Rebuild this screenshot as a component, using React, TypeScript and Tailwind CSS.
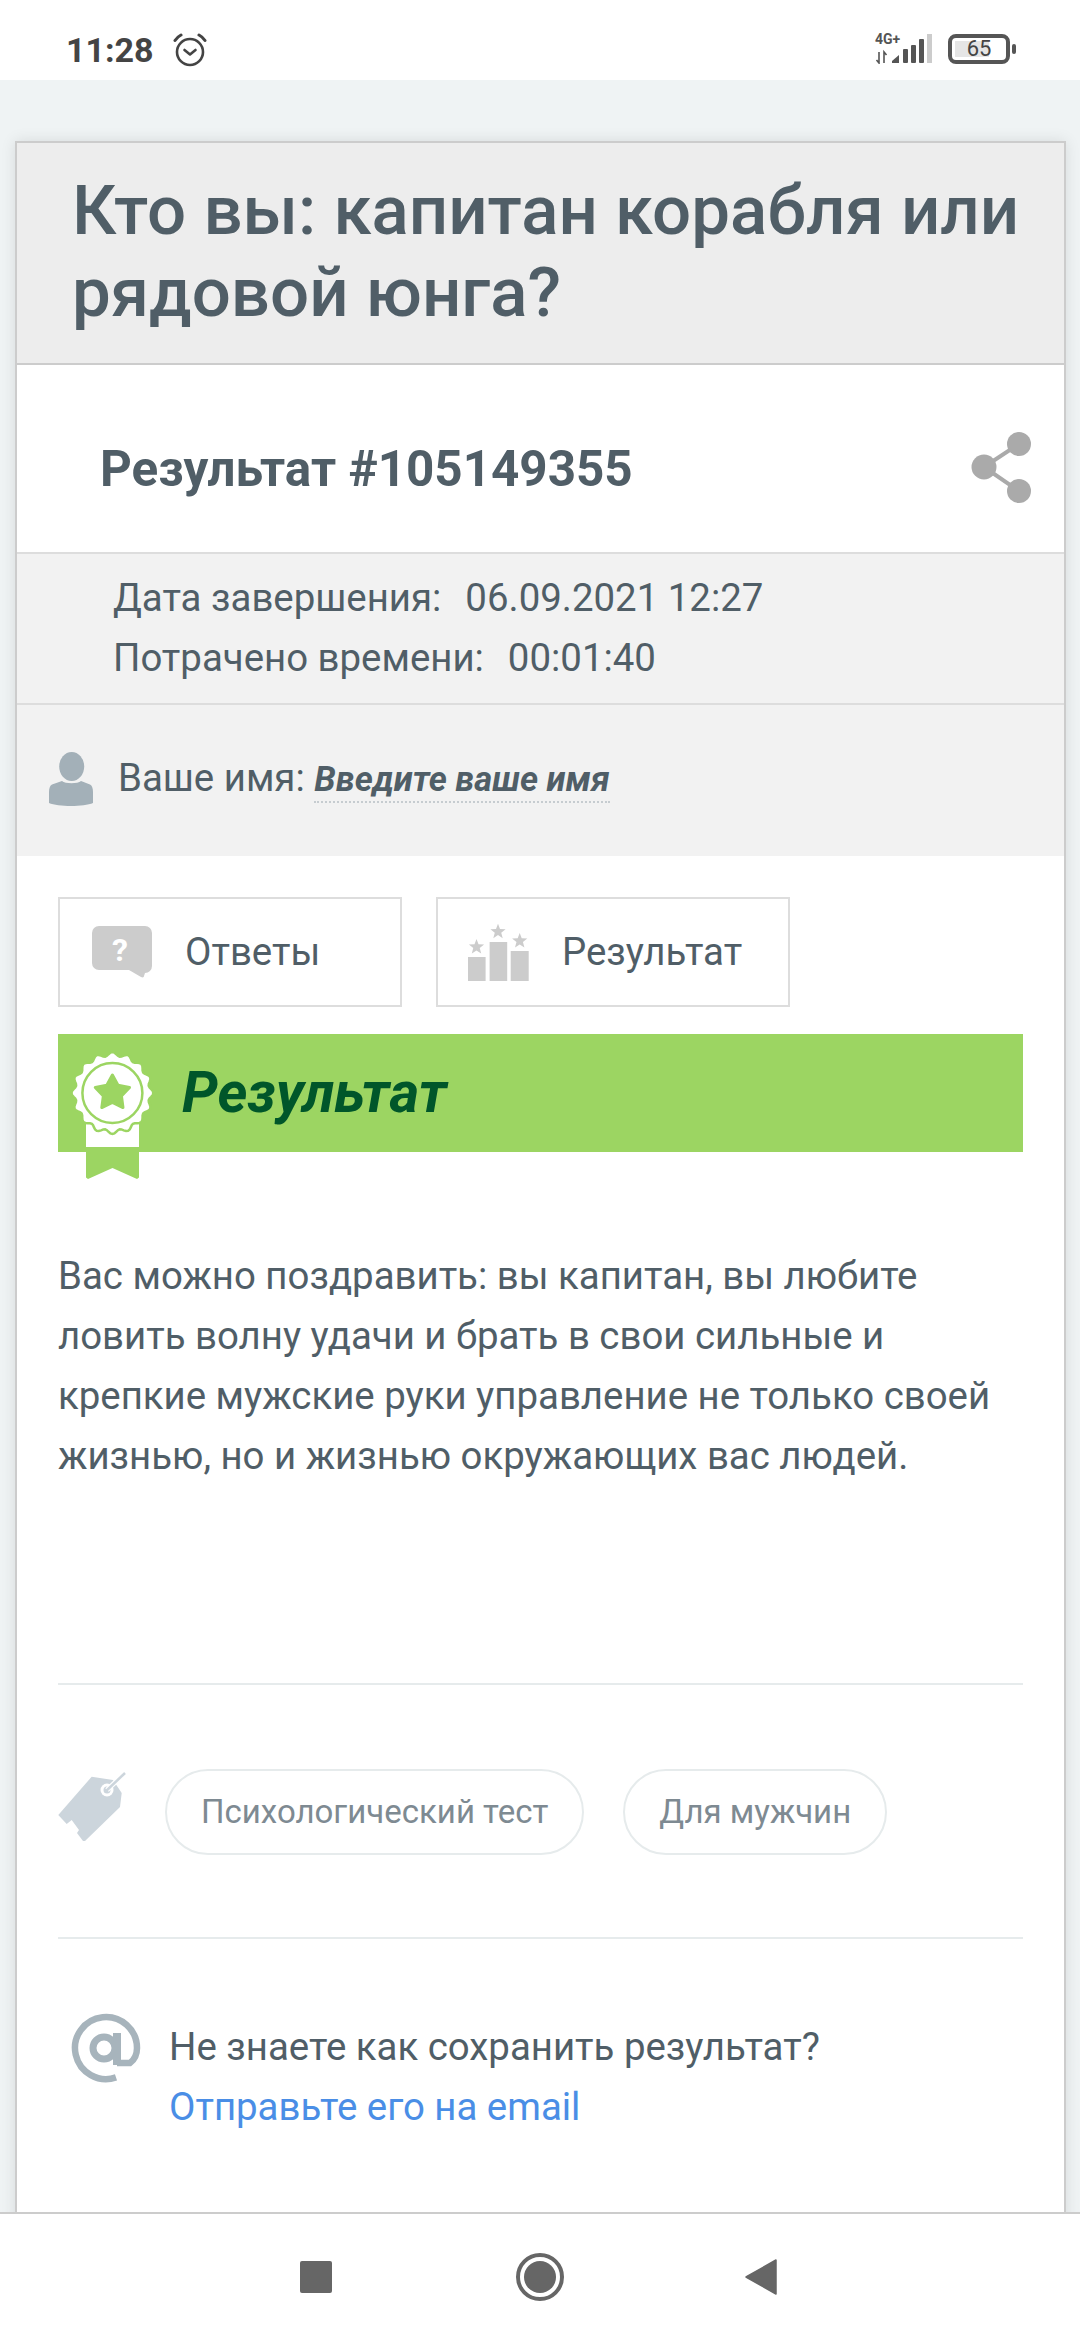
import React from 'react';

// Scalloped rosette outline for the medal
const scallopPath = (cx: number, cy: number, r: number, amp: number, n: number) => {
  const pts: string[] = [];
  const steps = n * 8;
  for (let i = 0; i < steps; i++) {
    const a = (i / steps) * Math.PI * 2;
    const rr = r + amp * Math.cos(a * n);
    pts.push(`${(cx + rr * Math.sin(a)).toFixed(2)},${(cy - rr * Math.cos(a)).toFixed(2)}`);
  }
  return pts.join(' ');
};

const starPoints = (cx: number, cy: number, R: number, r: number) => {
  const pts: string[] = [];
  for (let i = 0; i < 10; i++) {
    const a = (i / 10) * Math.PI * 2;
    const rr = i % 2 === 0 ? R : r;
    pts.push(`${(cx + rr * Math.sin(a)).toFixed(2)},${(cy - rr * Math.cos(a)).toFixed(2)}`);
  }
  return pts.join(' ');
};

const AlarmIcon = () => (
  <svg width="34" height="36" viewBox="1 0 34 36" fill="none" stroke="#444" strokeWidth="2.6" strokeLinecap="round" strokeLinejoin="round">
    <circle cx="18" cy="20" r="13" />
    <path d="M12.5 18l5.5 4.5 5.5-4.5" />
    <path d="M3 8.5c1.5-2.5 3.5-4.2 6-5.5" strokeWidth="3" />
    <path d="M33 8.5c-1.5-2.5-3.5-4.2-6-5.5" strokeWidth="3" />
  </svg>
);

const SignalIcon = () => (
  <svg width="57" height="30" viewBox="0 0 57 30" className="block">
    <path d="M4 18v11L1.5 26M9 29V18l2.5 3" fill="none" stroke="#555" strokeWidth="1.6" />
    <path d="M17 29v-2l7-6v8z" fill="#555" />
    <rect x="28" y="15" width="5" height="14" rx="1" fill="#555" />
    <rect x="36" y="11" width="5" height="18" rx="1" fill="#555" />
    <rect x="44" y="5" width="5" height="24" rx="1" fill="#555" />
    <rect x="52" y="0" width="5" height="29" fill="#ccc" />
  </svg>
);

const ShareIcon = () => (
  <svg width="60" height="72" viewBox="0 0 60 72">
    <path d="M13 35L48 12M13 35l35 24" stroke="#aaa" strokeWidth="4" fill="none" />
    <circle cx="48" cy="12" r="12" fill="#aaa" />
    <circle cx="13" cy="35" r="12.5" fill="#aaa" />
    <circle cx="48" cy="59" r="12" fill="#aaa" />
  </svg>
);

const PersonIcon = () => (
  <svg width="44" height="54" viewBox="9 12 44 54" fill="#a3b0b8">
    <ellipse cx="31.7" cy="26.5" rx="12.5" ry="14.5" />
    <path d="M22 41c3 3 16 3 19 0l9 3.500c2 1 3 4 3 7.500v11c-9 4-35 4-44 0V52c0-3.500 1-6.500 3-7.500z" />
  </svg>
);

const QuestionIcon = () => (
  <svg width="62" height="52" viewBox="0 0 62 52">
    <path d="M8 0h46a7 7 0 0 1 7 7v33a7 7 0 0 1-7 7l-1 3c0 1-1 2-3 1l-12-7H8a7 7 0 0 1-7-7V7a7 7 0 0 1 7-7z" fill="#ccc" />
    <text x="29" y="35" textAnchor="middle" fill="#fff" fontSize="32" fontWeight="700" fontFamily="Roboto, sans-serif">?</text>
  </svg>
);

const PodiumIcon = () => (
  <svg width="62" height="58" viewBox="0 0 62 58" fill="#ccc">
    <rect x="0" y="34" width="17.600" height="24" />
    <rect x="21.600" y="19" width="17.600" height="39" />
    <rect x="42.700" y="28" width="18" height="30" />
    <polygon points={starPoints(8.5, 24, 8, 3.4)} />
    <polygon points={starPoints(30, 8.7, 8, 3.4)} />
    <polygon points={starPoints(51.7, 18, 8, 3.4)} />
  </svg>
);

const MedalIcon = () => (
  <svg width="96" height="150" viewBox="0 0 96 150">
    <rect x="28" y="85" width="53" height="28" fill="#fff" />
    <path d="M28 118h53v25.500l-2 1.500-24.500-11L30 145l-2-1.500z" fill="#9cd562" />
    <polygon points={scallopPath(54.4, 59, 39, 2, 16)} fill="#fff" stroke="#9cd562" strokeWidth="2.500" />
    <circle cx="54.4" cy="59" r="30" fill="#fff" stroke="#9cd562" strokeWidth="2.500" />
    <polygon points={starPoints(54.4, 59, 18, 9.5)} fill="#9cd562" stroke="#9cd562" strokeWidth="3" strokeLinejoin="round" />
  </svg>
);

const TagIcon = () => (
  <svg width="70" height="74" viewBox="8 4 70 74" className="shrink-0">
    <path d="M41.700 11.700L63 15l8.700 13L70 42 35 76h-2l-6-8 2-3-7.300-10-5 4-8.400-9z" fill="#ccd5dc" />
    <circle cx="57" cy="25" r="6.500" fill="#fff" />
    <circle cx="57" cy="25" r="3.500" fill="#ccd5dc" />
    <path d="M57 25L75 8" stroke="#fff" strokeWidth="5" />
    <path d="M55 27L75 8" stroke="#ccd5dc" strokeWidth="2.500" />
  </svg>
);

const AtIcon = () => (
  <svg width="72" height="72" viewBox="10 8 72 72" fill="none" stroke="#a7b4bc" className="shrink-0">
    <path d="M56 72.400A31 31 0 1 1 77 43c0 7-3 12-7 15H57" strokeWidth="6.500" />
    <circle cx="44" cy="43" r="11" strokeWidth="7" />
    <rect x="53" y="28" width="8" height="32" fill="#a7b4bc" stroke="none" />
  </svg>
);

const App: React.FC = () => {
  return (
    <div className="flex flex-col h-[2340px] overflow-hidden bg-white font-['Roboto',sans-serif] text-[#505e67]">
      {/* status bar */}
      <div className="flex items-center justify-between h-[80px] pt-[20px] pl-[66px] pr-[64px] bg-white shrink-0">
        <div className="flex items-center gap-[19px]">
          <span className="text-[34px] font-bold leading-none text-[#444]">11:28</span>
          <AlarmIcon />
        </div>
        <div className="flex items-center gap-[16px] -mt-[2px]">
          <div className="relative w-[57px] h-[30px]">
            <SignalIcon />
            <span className="absolute left-0 top-[-2px] text-[14px] font-bold leading-none text-[#555]">4G+</span>
          </div>
          <div className="flex items-center gap-[2px]">
            <div className="flex items-center w-[62px] h-[30px] border-[4px] border-[#555] rounded-[8px] p-[3px] relative">
              <div className="w-[70%] h-full bg-[#e5e5e5]" />
              <span className="absolute inset-0 flex items-center justify-center text-[22px] leading-none text-[#444]">65</span>
            </div>
            <div className="w-[4px] h-[10px] rounded-[2px] bg-[#555]" />
          </div>
        </div>
      </div>

      {/* page */}
      <div className="flex-1 min-h-0 bg-[#eff3f4] pl-[15px] pr-[14px] pt-[61px] overflow-hidden">
        <div className="border-x-2 border-t-2 border-[#ccc] shadow-[0_0_14px_rgba(0,0,0,0.1)] bg-white h-[2200px]">
          <div className="h-[222px] bg-[#ededed] border-b-2 border-[#ccc] pl-[55px] pt-[27px] pr-[20px]">
            <h1 className="text-[69px] font-medium leading-[82px]">Кто вы: капитан корабля или рядовой юнга?</h1>
          </div>

          <div className="flex items-center justify-between h-[189px] pt-[18px] border-b-2 border-[#ddd] pl-[83px] pr-[33px]">
            <h2 className="mt-[4px] text-[49.4px] font-bold leading-none">Результат #105149355</h2>
            <ShareIcon />
          </div>

          <div className="h-[151px] bg-[#f2f2f2] border-b-2 border-[#ddd] pl-[96px] pt-[14px] text-[38.4px] leading-[60px]">
            <div>Дата завершения:<span className="ml-[24px]">06.09.2021 12:27</span></div>
            <div>Потрачено времени:<span className="ml-[24px]">00:01:40</span></div>
          </div>

          <div className="flex items-center h-[151px] pb-[4px] bg-[#f2f2f2] pl-[32px] gap-[25px] text-[38.4px]">
            <PersonIcon />
            <div className="leading-none">
              Ваше имя:{' '}
              <span className="font-bold italic text-[34.6px] border-b-2 border-dotted border-[#c6ccd0] pb-[2px]">Введите ваше имя</span>
            </div>
          </div>

          <div className="px-[41px]">
            <div className="flex gap-[34px] mt-[41px]">
              <div className="flex items-center w-[344px] h-[110px] border-2 border-[#ddd] pl-[31px] gap-[32px] text-[38.4px]">
                <QuestionIcon />
                <span>Ответы</span>
              </div>
              <div className="flex items-center w-[354px] h-[110px] border-2 border-[#ddd] pl-[30px] gap-[32px] text-[38.4px]">
                <PodiumIcon />
                <span>Результат</span>
              </div>
            </div>

            <div className="relative flex items-center h-[118px] mt-[27px] bg-[#9cd562] pl-[124px]">
              <div className="absolute left-0 top-0">
                <MedalIcon />
              </div>
              <h3 className="italic font-bold text-[57.2px] leading-none text-[#00562a]">Результат</h3>
            </div>

            <p className="mt-[94px] text-[38.4px] leading-[60px]">
              Вас можно поздравить: вы капитан, вы любите ловить волну удачи и брать в свои сильные и крепкие мужские руки управление не только своей жизнью, но и жизнью окружающих вас людей.
            </p>

            <div className="mt-[197px] border-t-2 border-[#e6ebec]" />

            <div className="flex items-start mt-[84px] h-[86px]">
              <TagIcon />
              <div className="flex gap-[39px] ml-[37px]">
                <span className="flex items-center h-[86px] px-[34px] rounded-[43px] border-2 border-[#e6ebec] text-[33px] text-[#7e8a92]">Психологический тест</span>
                <span className="flex items-center h-[86px] px-[34px] rounded-[43px] border-2 border-[#e6ebec] text-[33px] text-[#7e8a92]">Для мужчин</span>
              </div>
            </div>

            <div className="mt-[82px] border-t-2 border-[#e6ebec]" />

            <div className="flex items-start mt-[74px] pl-[12px]">
              <AtIcon />
              <div className="ml-[27px] pt-[4px] text-[38.4px] leading-[60px]">
                <div>Не знаете как сохранить результат?</div>
                <div className="text-[#4a8ee6]">Отправьте его на email</div>
              </div>
            </div>
          </div>
        </div>
      </div>

      {/* nav bar */}
      <div className="relative z-10 flex items-center justify-center h-[128px] pr-[4px] bg-white border-t-2 border-[#ccc] shrink-0">
        <div className="w-[32px] h-[32px] bg-[#666] rounded-[2px]" />
        <div className="flex items-center justify-center w-[48px] h-[48px] ml-[184px] rounded-full border-[4px] border-[#666]">
          <div className="w-[32px] h-[32px] rounded-full bg-[#666]" />
        </div>
        <svg width="32" height="36" viewBox="0 0 32 36" className="ml-[181px]">
          <path d="M31 1v34L1 18z" fill="#666" stroke="#666" strokeWidth="1.5" strokeLinejoin="round" />
        </svg>
      </div>
    </div>
  );
};

export default App;
